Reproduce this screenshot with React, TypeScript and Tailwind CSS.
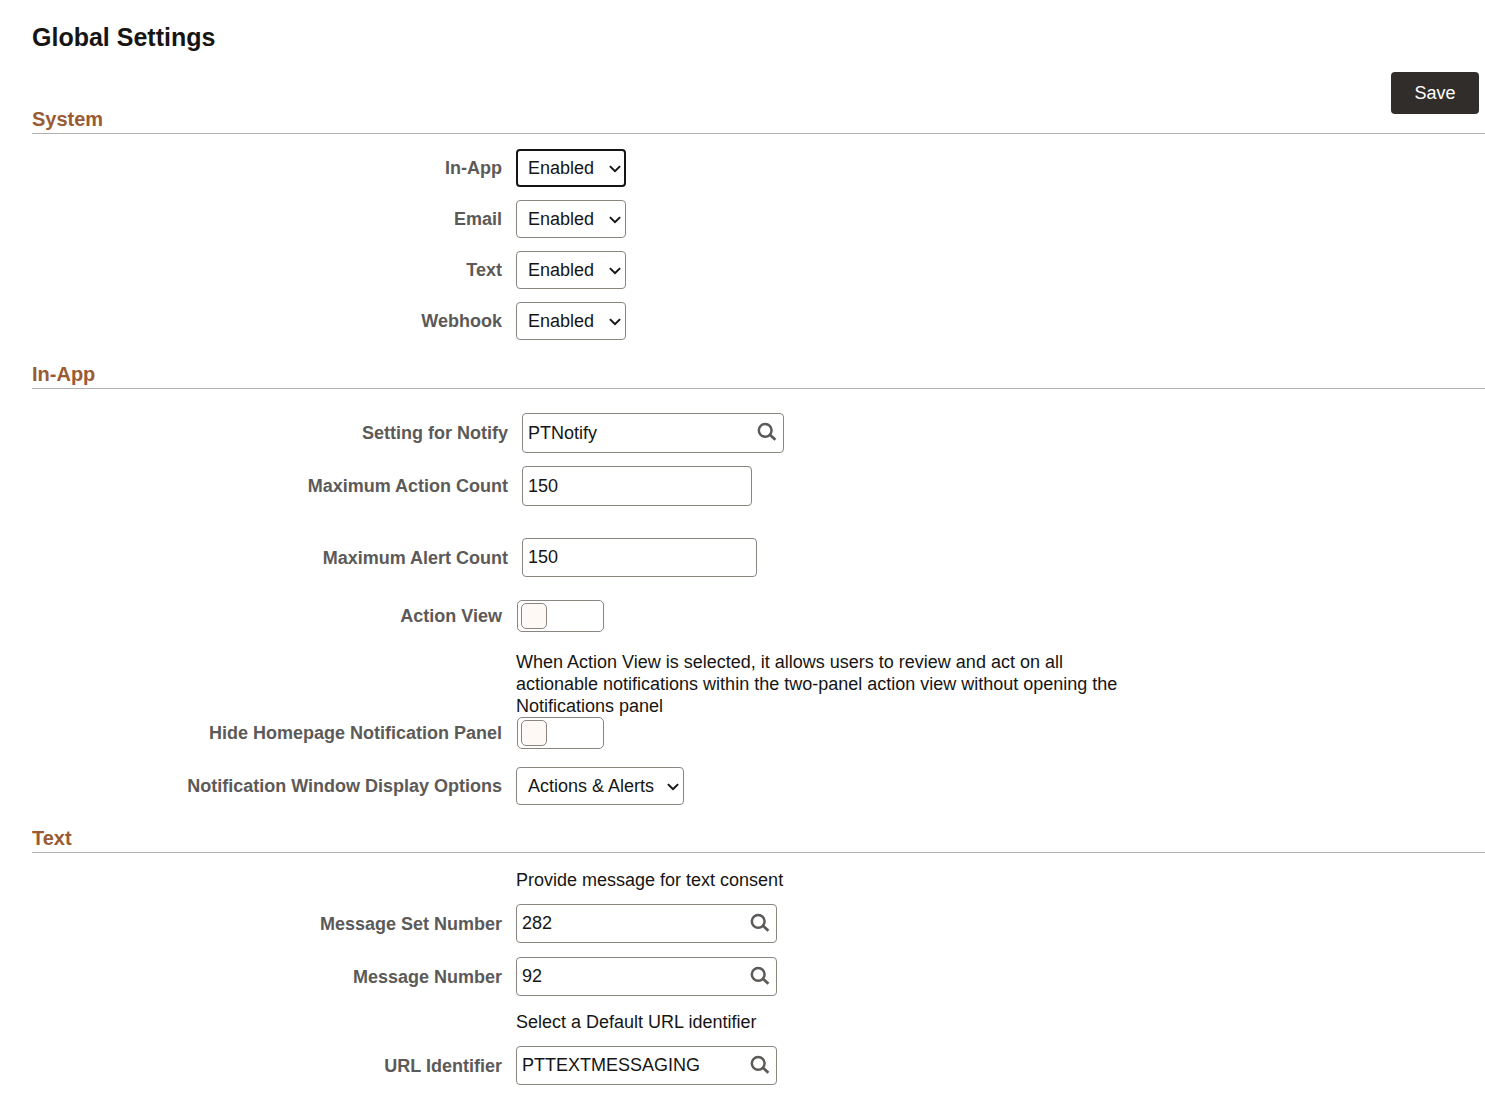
import { useState, type ReactNode } from "react";
import clsx from "clsx";

interface SectionProps {
  title: string;
  children: ReactNode;
}

interface RowProps {
  label: string;
  id: string;
  wide?: boolean;
  className?: string;
  children: ReactNode;
}

interface SelectProps {
  id: string;
  options: string[];
  active?: boolean;
  className?: string;
}

interface TextFieldProps {
  id: string;
  value: string;
  lookup?: boolean;
  className?: string;
}

const channels = ["In-App", "Email", "Text", "Webhook"];

function Section({ title, children }: SectionProps) {
  return (
    <section>
      <h2 className="h-7 border-b border-[#b4b2b0] text-xl leading-[26px] font-bold text-[#9a5b34]">
        {title}
      </h2>
      {children}
    </section>
  );
}

function Row({ label, id, wide, className, children }: RowProps) {
  return (
    <div className={clsx("flex items-center gap-3.5", className)}>
      <label
        htmlFor={id}
        className={clsx(
          "shrink-0 text-right font-bold text-[#5c5a58]",
          wide ? "w-[476px]" : "w-[470px]"
        )}
      >
        {label}
      </label>
      {children}
    </div>
  );
}

function Note({ className, children }: { className?: string; children: ReactNode }) {
  return <p className={clsx("ml-[484px] max-w-[620px]", className)}>{children}</p>;
}

function SelectField({ id, options, active, className }: SelectProps) {
  const [value, setValue] = useState(options[0]);
  return (
    <div className={clsx("relative", className)}>
      <select
        id={id}
        value={value}
        onChange={(e) => setValue(e.target.value)}
        className={clsx(
          "block h-[38px] w-full appearance-none rounded bg-white outline-none",
          active ? "border-2 border-[#161513] pl-2.5" : "border border-[#8b8580] pl-[11px]"
        )}
      >
        {options.map((option) => (
          <option key={option}>{option}</option>
        ))}
      </select>
      <svg
        width="12"
        height="8"
        viewBox="0 0 12 8"
        fill="none"
        stroke="#161513"
        strokeWidth="2"
        aria-hidden="true"
        className="pointer-events-none absolute top-4 right-[5px]"
      >
        <path d="M0.9 1.1L6 6.2L11.1 1.1" />
      </svg>
    </div>
  );
}

function SearchIcon() {
  return (
    <svg width="20" height="20" viewBox="0 0 20 20" fill="none" stroke="#5c5a58" aria-hidden="true">
      <circle cx="8.2" cy="8.3" r="6.4" strokeWidth="2.5" />
      <path d="M12.6 12.4L18.4 17.8" strokeWidth="2.8" />
    </svg>
  );
}

function TextField({ id, value: initial, lookup, className }: TextFieldProps) {
  const [value, setValue] = useState(initial);
  return (
    <div className={clsx("flex items-center rounded border border-[#8b8580] bg-white", className)}>
      <input
        id={id}
        type="text"
        value={value}
        onChange={(e) => setValue(e.target.value)}
        className="h-full w-full min-w-0 bg-transparent pl-[5px] outline-none"
      />
      {lookup && (
        <button type="button" aria-label="Look up" className="mr-1.5 shrink-0 pb-0.5">
          <SearchIcon />
        </button>
      )}
    </div>
  );
}

function Toggle({ id }: { id: string }) {
  const [on, setOn] = useState(false);
  return (
    <input
      id={id}
      type="checkbox"
      role="switch"
      checked={on}
      onChange={() => setOn(!on)}
      className="ml-px flex h-8 w-[87px] appearance-none items-center rounded-[5px] border border-[#8b8580] bg-white px-[3px] before:h-[26px] before:w-[26px] before:rounded-[5px] before:border before:border-[#8b8580] before:bg-[#fef9f4] before:content-[''] checked:justify-end"
    />
  );
}

export default function App() {
  return (
    <main className="min-h-screen bg-white pt-5 pb-4 pl-8 font-['Liberation_Sans',Arial,sans-serif] text-lg leading-[22px] text-[#161513]">
      <h1 className="text-[25px] leading-[34px] font-bold">Global Settings</h1>
      <div className="mt-[18px] -mb-2 flex justify-end pr-1.5">
        <button type="button" className="h-[42px] w-[88px] rounded bg-[#312d2a] text-white">
          Save
        </button>
      </div>

      <Section title="System">
        <div className="mt-[15px] mb-[21px] flex flex-col gap-[13px]">
          {channels.map((channel, i) => (
            <Row key={channel} label={channel} id={`channel-${i}`}>
              <SelectField
                id={`channel-${i}`}
                options={["Enabled", "Disabled"]}
                active={i === 0}
                className="w-[110px]"
              />
            </Row>
          ))}
        </div>
      </Section>

      <Section title="In-App">
        <Row wide label="Setting for Notify" id="notify" className="mt-6">
          <TextField lookup id="notify" value="PTNotify" className="h-10 w-[262px]" />
        </Row>
        <Row wide label="Maximum Action Count" id="action-count" className="mt-[13px]">
          <TextField id="action-count" value="150" className="h-10 w-[230px]" />
        </Row>
        <Row wide label="Maximum Alert Count" id="alert-count" className="mt-8">
          <TextField id="alert-count" value="150" className="h-[39px] w-[235px]" />
        </Row>
        <Row label="Action View" id="action-view" className="mt-[23px]">
          <Toggle id="action-view" />
        </Row>
        <Note className="mt-[19px]">
          When Action View is selected, it allows users to review and act on all actionable
          notifications within the two-panel action view without opening the Notifications panel
        </Note>
        <Row label="Hide Homepage Notification Panel" id="hide-panel">
          <Toggle id="hide-panel" />
        </Row>
        <Row
          label="Notification Window Display Options"
          id="display-options"
          className="mt-[18px] mb-5"
        >
          <SelectField
            id="display-options"
            options={["Actions & Alerts", "Actions", "Alerts"]}
            className="w-[168px]"
          />
        </Row>
      </Section>

      <Section title="Text">
        <Note className="mt-4">Provide message for text consent</Note>
        <Row label="Message Set Number" id="set-number" className="mt-[13px]">
          <TextField lookup id="set-number" value="282" className="h-[39px] w-[261px]" />
        </Row>
        <Row label="Message Number" id="message-number" className="mt-3.5">
          <TextField lookup id="message-number" value="92" className="h-[39px] w-[261px]" />
        </Row>
        <Note className="mt-[15px]">Select a Default URL identifier</Note>
        <Row label="URL Identifier" id="url-identifier" className="mt-[13px]">
          <TextField
            lookup
            id="url-identifier"
            value="PTTEXTMESSAGING"
            className="h-[39px] w-[261px]"
          />
        </Row>
      </Section>
    </main>
  );
}
